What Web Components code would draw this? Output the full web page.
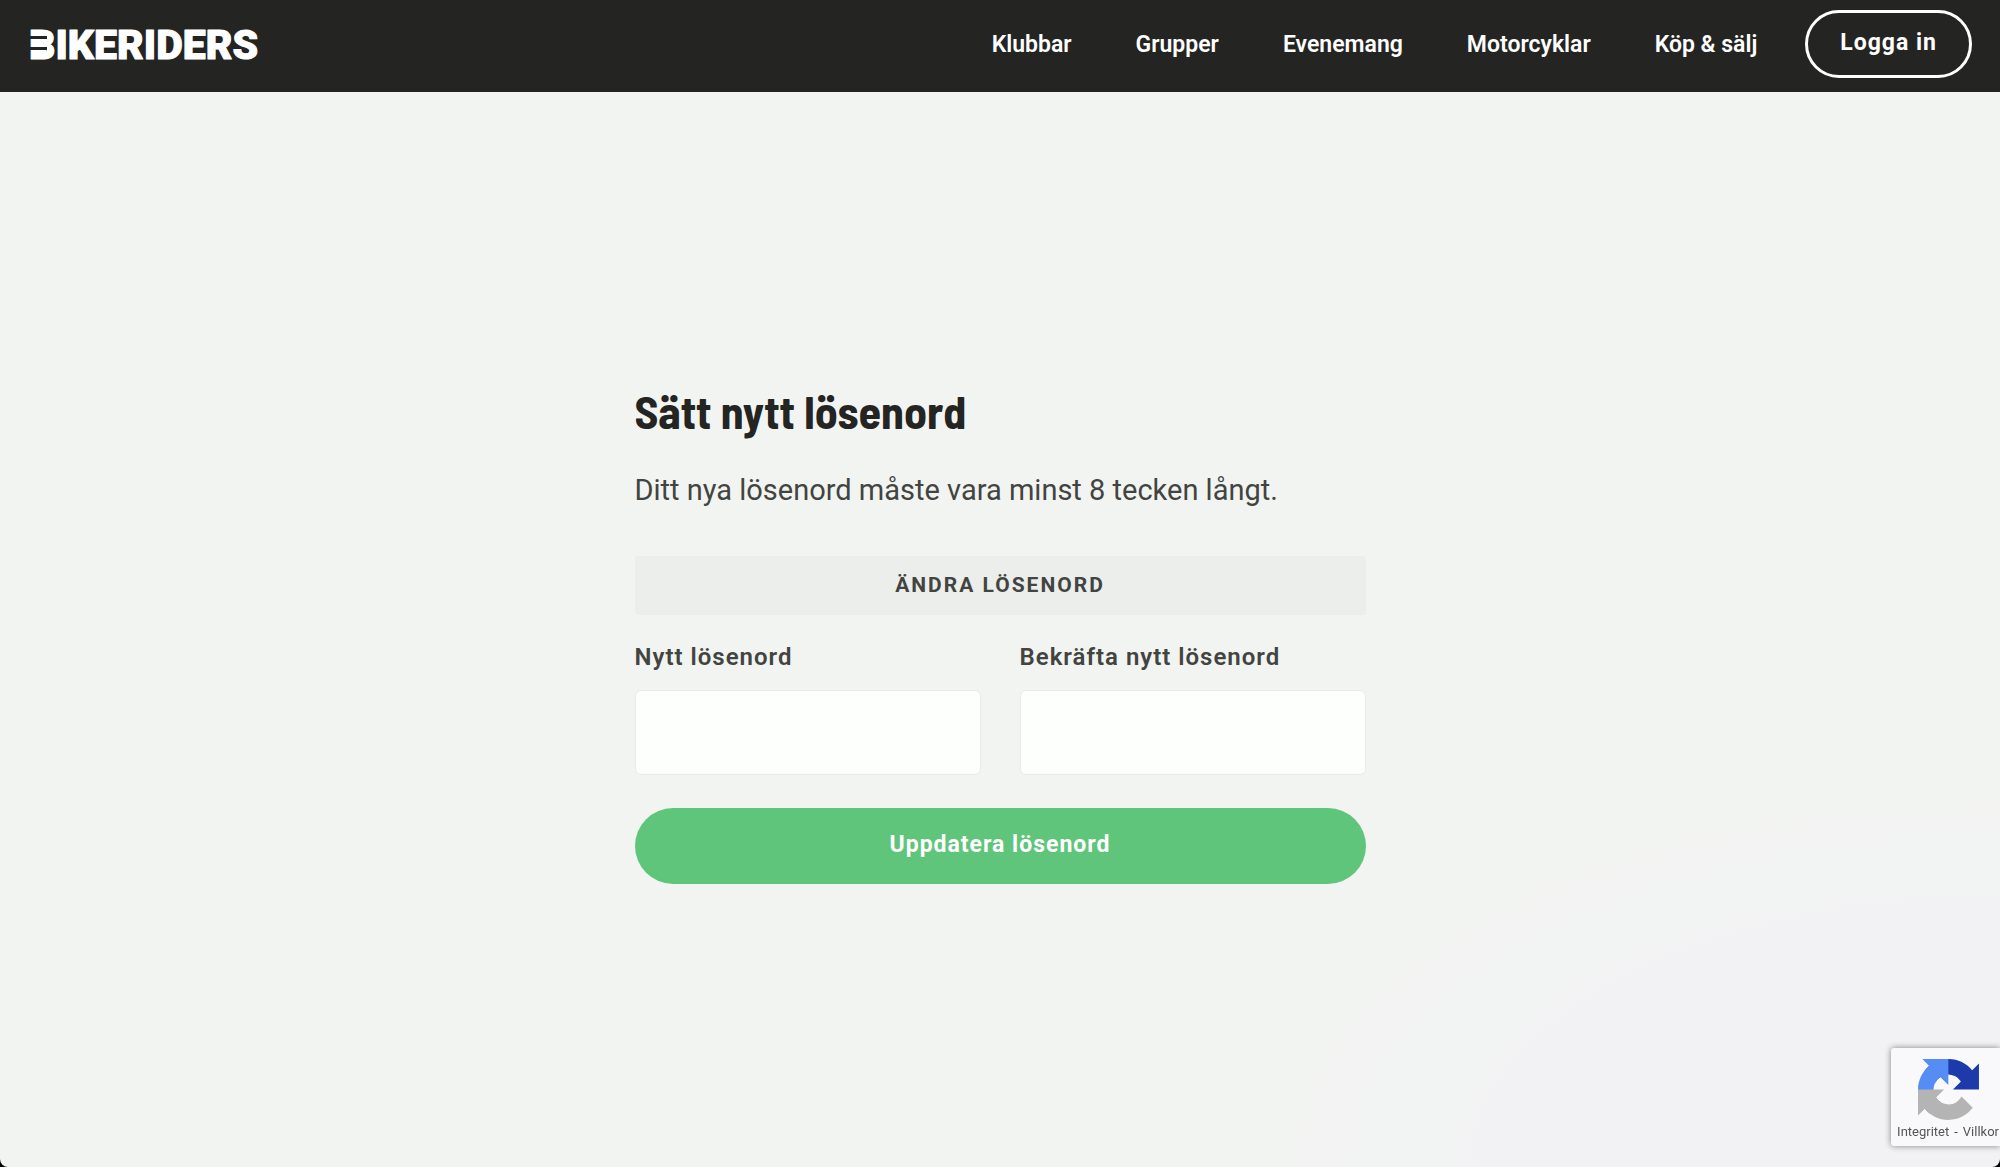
<!DOCTYPE html>
<html lang="sv">
<head>
<meta charset="utf-8">
<meta name="viewport" content="width=device-width, initial-scale=1">
<title>Sätt nytt lösenord - Bikeriders</title>
<style>
    html {
        background: #000;
    }
    body {
        margin: 0;
        font-family: Roboto, "Liberation Sans", sans-serif;
        color: #424441;
    }
</style>
</head>
<body>
<app-shell>
    <site-header slot="header">
        <nav-link href="#klubbar">Klubbar</nav-link>
        <nav-link href="#grupper">Grupper</nav-link>
        <nav-link href="#evenemang">Evenemang</nav-link>
        <nav-link href="#motorcyklar">Motorcyklar</nav-link>
        <nav-link href="#kop-salj">Köp &amp; sälj</nav-link>
        <pill-button variant="outline" slot="action">Logga in</pill-button>
    </site-header>
    <password-form></password-form>
    <recaptcha-badge slot="badge"></recaptcha-badge>
</app-shell>

<script>
class AppShell extends HTMLElement {
    constructor() {
        super();
        this.attachShadow({ mode: 'open' });
        this.shadowRoot.innerHTML = `
            <style>
                :host {
                    display: flex;
                    flex-direction: column;
                    min-height: 100vh;
                    overflow: hidden;
                    border-radius: 0 0 8px 8px;
                    background: radial-gradient(ellipse 40% 35% at bottom right, #f2f2f4 60%, #f2f4f1);
                }
                main {
                    flex: 1;
                    display: grid;
                    place-items: center;
                    padding: 0 24px;
                }
            </style>
            <slot name="header"></slot>
            <main><slot></slot></main>
            <slot name="badge"></slot>
        `;
    }
}

class SiteHeader extends HTMLElement {
    constructor() {
        super();
        this.attachShadow({ mode: 'open' });
        this.shadowRoot.innerHTML = `
            <style>
                :host {
                    display: block;
                    background: #242523;
                }
                header {
                    display: flex;
                    align-items: center;
                    justify-content: space-between;
                    padding: 10px 28px 14px 30px;
                }
                .logo {
                    display: block;
                    color: #fff;
                }
                .logo svg {
                    display: block;
                }
                .logo text {
                    font: 900 41px Roboto, sans-serif;
                    fill: currentColor;
                    stroke: currentColor;
                    stroke-width: 1px;
                    stroke-linejoin: round;
                }
                .logo .bar {
                    fill: currentColor;
                }
                .logo .cut {
                    fill: #242523;
                }
                .right, nav {
                    display: flex;
                    align-items: center;
                }
                .right {
                    gap: 48px;
                }
                nav {
                    gap: 64px;
                }
            </style>
            <header>
                <a class="logo" href="#" aria-label="Bikeriders">
                    <svg width="260" height="60" viewBox="0 0 260 60">
                        <text x="-1" y="45">BIKERIDERS</text>
                        <!-- the B has no stem, only three bars -->
                        <rect class="bar" x="4" y="18" width="12" height="24"/>
                        <rect class="cut" x="-1" y="22" width="18" height="3"/>
                        <rect class="cut" x="-1" y="33" width="18" height="3"/>
                    </svg>
                </a>
                <div class="right">
                    <nav><slot></slot></nav>
                    <slot name="action"></slot>
                </div>
            </header>
        `;
    }
}

class NavLink extends HTMLElement {
    constructor() {
        super();
        this.attachShadow({ mode: 'open' });
        this.shadowRoot.innerHTML = `
            <style>
                :host {
                    display: block;
                }
                a {
                    display: block;
                    padding-top: 2px;
                    color: #fff;
                    font-size: 23px;
                    font-weight: 600;
                    line-height: 28px;
                    text-decoration: none;
                    white-space: nowrap;
                }
            </style>
            <a><slot></slot></a>
        `;
    }

    connectedCallback() {
        this.shadowRoot.querySelector('a').href = this.getAttribute('href');
    }
}

class PillButton extends HTMLElement {
    constructor() {
        super();
        this.attachShadow({ mode: 'open' });
        this.shadowRoot.innerHTML = `
            <style>
                :host {
                    display: block;
                }
                button {
                    display: block;
                    width: 100%;
                    padding: 23px 32px 25px;
                    border: 0;
                    border-radius: 38px;
                    background: #5fc57b;
                    color: #fff;
                    font-family: inherit;
                    font-size: 23px;
                    font-weight: 700;
                    line-height: 28px;
                    letter-spacing: 1px;
                    white-space: nowrap;
                    cursor: pointer;
                }
                :host([variant="outline"]) button {
                    padding: 16px 32px 18px;
                    border: 3px solid #fff;
                    background: transparent;
                }
            </style>
            <button type="button"><slot></slot></button>
        `;
    }
}

class PasswordField extends HTMLElement {
    constructor() {
        super();
        this.attachShadow({ mode: 'open' });
        this.shadowRoot.innerHTML = `
            <style>
                :host {
                    display: block;
                }
                label {
                    display: block;
                    margin-bottom: 19px;
                    font-size: 24px;
                    font-weight: 600;
                    line-height: 28px;
                    letter-spacing: 1px;
                }
                input {
                    display: block;
                    box-sizing: border-box;
                    width: 100%;
                    height: 85px;
                    padding: 0 24px;
                    border: 1px solid #e9ebe9;
                    border-radius: 6px;
                    background: #fdfffc;
                    font: inherit;
                    font-size: 23px;
                }
            </style>
            <label for="password"><slot></slot></label>
            <input id="password" type="password" autocomplete="new-password">
        `;
    }
}

class PasswordForm extends HTMLElement {
    constructor() {
        super();
        this.attachShadow({ mode: 'open' });
        this.shadowRoot.innerHTML = `
            <style>
                :host {
                    display: block;
                    width: 100%;
                    max-width: 731px;
                }
                h1 {
                    margin: 0 0 28px;
                    color: #242523;
                    font-family: "Barlow Semi Condensed", "Roboto Condensed", "Liberation Sans Narrow", Roboto, sans-serif;
                    font-size: 46px;
                    font-weight: 700;
                    line-height: 70px;
                }
                p {
                    margin: 0 0 50px;
                    font-size: 29px;
                    line-height: 32px;
                }
                h2 {
                    margin: 0 0 28px;
                    padding: 15px;
                    border-radius: 3px;
                    background: #eceeeb;
                    font-size: 21px;
                    font-weight: 700;
                    line-height: 29px;
                    letter-spacing: 2px;
                    text-align: center;
                    text-transform: uppercase;
                }
                .fields {
                    display: grid;
                    grid-template-columns: 1fr 1fr;
                    gap: 39px;
                    margin-bottom: 33px;
                }
            </style>
            <h1>Sätt nytt lösenord</h1>
            <p>Ditt nya lösenord måste vara minst 8 tecken långt.</p>
            <form>
                <h2>Ändra lösenord</h2>
                <div class="fields">
                    <password-field>Nytt lösenord</password-field>
                    <password-field>Bekräfta nytt lösenord</password-field>
                </div>
                <pill-button>Uppdatera lösenord</pill-button>
            </form>
        `;
    }
}

class RecaptchaBadge extends HTMLElement {
    constructor() {
        super();
        this.attachShadow({ mode: 'open' });
        this.shadowRoot.innerHTML = `
            <style>
                :host {
                    position: fixed;
                    right: 0;
                    bottom: 21px;
                    display: flex;
                    flex-direction: column;
                    align-items: center;
                    gap: 4px;
                    padding: 11px 1px 6px 6px;
                    border-radius: 3px 0 0 3px;
                    background: #f9f9fb;
                    box-shadow: 0 0 6px #808080;
                    font-size: 13px;
                    line-height: 16px;
                    white-space: nowrap;
                }
                svg {
                    display: block;
                }
                div {
                    display: flex;
                    gap: 5px;
                }
                a {
                    color: #555;
                    text-decoration: none;
                }
            </style>
            <svg width="61" height="61" viewBox="0 0 64 64" aria-hidden="true">
                <path fill="#1c3aa9" d="M64 31.955l-.033-1.37V4.687l-7.16 7.16C50.948 4.674 42.033.093 32.05.093c-10.4 0-19.622 4.96-25.458 12.64l11.736 11.86a15.55 15.55 0 0 1 4.754-5.334c2.05-1.6 4.952-2.906 8.968-2.906.485 0 .86.057 1.135.163 4.976.393 9.288 3.14 11.828 7.124l-8.307 8.307L64 31.953"/>
                <path fill="#568df5" d="M31.862.094l-1.37.033H4.594l7.16 7.16C4.58 13.147 0 22.06 0 32.046c0 10.4 4.96 19.622 12.64 25.458L24.5 45.768a15.55 15.55 0 0 1-5.334-4.754c-1.6-2.05-2.906-4.952-2.906-8.968 0-.485.057-.86.163-1.135.393-4.976 3.14-9.288 7.124-11.828l8.307 8.307L31.86.095"/>
                <path fill="#b4b4b4" d="M.001 32.045l.033 1.37v25.898l7.16-7.16c5.86 7.173 14.774 11.754 24.76 11.754 10.4 0 19.622-4.96 25.458-12.64l-11.736-11.86a15.55 15.55 0 0 1-4.754 5.334c-2.05 1.6-4.952 2.906-8.968 2.906-.485 0-.86-.057-1.135-.163-4.976-.393-9.288-3.14-11.828-7.124l8.307-8.307c-10.522.04-22.4.066-27.295-.005"/>
            </svg>
            <div><a href="#integritet">Integritet</a><span>-</span><a href="#villkor">Villkor</a></div>
        `;
    }
}

customElements.define('app-shell', AppShell);
customElements.define('site-header', SiteHeader);
customElements.define('nav-link', NavLink);
customElements.define('pill-button', PillButton);
customElements.define('password-field', PasswordField);
customElements.define('password-form', PasswordForm);
customElements.define('recaptcha-badge', RecaptchaBadge);
</script>
</body>
</html>
